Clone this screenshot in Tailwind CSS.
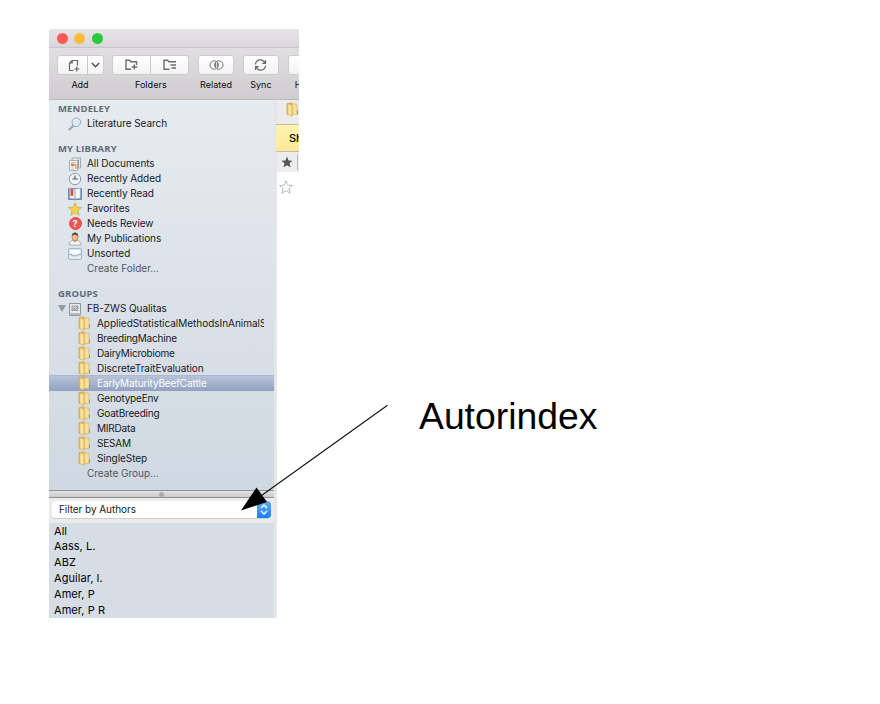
<!DOCTYPE html>
<html lang="en">
<head>
<meta charset="utf-8">
<title>Autorindex</title>
<script src="https://cdn.jsdelivr.net/npm/@tailwindcss/browser@4"></script>
</head>
<body class="relative h-[704px] w-[880px] overflow-hidden bg-white font-['Inter','Liberation_Sans',sans-serif] text-[10px] text-[#17191d]">
<svg class="absolute size-0">
  <defs>
    <linearGradient id="gold" x1="0" x2="1"><stop offset="0" stop-color="#ecc261"/><stop offset=".5" stop-color="#fdebb0"/><stop offset="1" stop-color="#efcd7a"/></linearGradient>
    <symbol id="folder" viewBox="0 0 13 15"><path d="M1 1.8 6 .7l.5 11.500L1 12.500z" fill="#e8bb56" stroke="#cda24a" stroke-width=".6"/><path d="M6 2h5v10.500H6z" fill="#f8df9a" stroke="#d3ab5a" stroke-width=".6"/><path d="M1.300 1.500 6.200 3.200v11L1.300 12.400z" fill="url(#gold)" stroke="#d3a447" stroke-width=".6"/><path d="M11.500 8.600v3.500" stroke="#7f9390" stroke-width=".9"/></symbol>
    <symbol id="star" viewBox="0 0 14 14"><path d="m7 .7 1.800 4.500 4.700.3-3.600 3 1.200 4.700L7 10.700l-4.100 2.500 1.200-4.700-3.600-3 4.700-.3z"/></symbol>
  </defs>
</svg>

<main class="ml-[49px] mt-[29px] flex h-[589px] w-[250px] flex-col overflow-hidden bg-white">
  <header class="h-[71px] shrink-0 overflow-hidden rounded-tl-[3px] border-b border-[#bcb9bc] bg-gradient-to-b from-[#e7e5e7] to-[#d0cdd0]">
    <div class="flex h-[19px] items-center gap-[6.5px] border-b border-[#c8c5c8] bg-gradient-to-b from-[#e6e4e6] to-[#d9d7d9] pl-[7.5px]">
      <i class="size-[11px] rounded-full bg-[#fc5b57]"></i><i class="size-[11px] rounded-full bg-[#fdbb3e]"></i><i class="size-[11px] rounded-full bg-[#2bc840]"></i>
    </div>
    <div class="flex w-[300px] gap-[8.8px] pl-[7.5px] pt-[7px] text-[9px] leading-[12px] text-[#0c0c0c]">
      <div class="w-[47px] shrink-0 text-center">
        <div class="flex h-[20px] rounded-[3px] border border-[#cfcccf] bg-gradient-to-b from-white to-[#f4f3f4]">
          <span class="flex w-[30px] items-center justify-center border-r border-[#cac8ca]"><svg class="ml-1 h-[13px] w-[12px]" viewBox="0 0 12 13" fill="none" stroke="#666" stroke-width="1.2"><path d="M5.500 11.500H1.500V4L4 1.500h5.500v5M4.200 1.500V4H1.500M8.800 7.500v5M6.300 10h5"/></svg></span>
          <span class="flex flex-1 items-center justify-center"><svg class="h-[6px] w-[9px]" viewBox="0 0 9 6" fill="none" stroke="#4b4b4b" stroke-width="1.400"><path d="m.8 1 3.700 3.800L8.200 1"/></svg></span>
        </div>
        <p class="mt-[4px]">Add</p>
      </div>
      <div class="w-[77px] shrink-0 text-center">
        <div class="flex h-[20px] rounded-[3px] border border-[#cfcccf] bg-gradient-to-b from-white to-[#f4f3f4]">
          <span class="flex flex-1 items-center justify-center border-r border-[#cac8ca]"><svg class="h-[12px] w-[13px]" viewBox="0 0 13 12" fill="none" stroke="#6b6b6b" stroke-width="1.400"><path d="M6 10.300H1V1.200h3.500L6 2.800h5.500V6M9.300 5.500v5M6.800 8h5.500"/></svg></span>
          <span class="flex flex-1 items-center justify-center"><svg class="h-[12px] w-[14px]" viewBox="0 0 14 12" fill="none" stroke="#6b6b6b" stroke-width="1.400"><path d="M6.500 10.300H1V1.200h3.500L6 2.800h7M7.500 6h5.500M8.500 9h4.500"/></svg></span>
        </div>
        <p class="mt-[4px] tracking-[.05px]">Folders</p>
      </div>
      <div class="w-[36px] shrink-0 text-center">
        <div class="flex h-[20px] items-center justify-center rounded-[3px] border border-[#cfcccf] bg-gradient-to-b from-white to-[#f4f3f4]"><svg class="h-[10px] w-[15px]" viewBox="0 0 15 10" fill="none" stroke="#747474"><circle cx="5.200" cy="5" r="4.200"/><circle cx="9.800" cy="5" r="4.200"/><path d="M6.600 3v4M8.400 3v4"/></svg></div>
        <p class="mt-[4px] tracking-[.05px]">Related</p>
      </div>
      <div class="w-[36px] shrink-0 text-center">
        <div class="flex h-[20px] items-center justify-center rounded-[3px] border border-[#cfcccf] bg-gradient-to-b from-white to-[#f4f3f4]"><svg class="h-[12px] w-[13px]" viewBox="0 0 13 12" fill="none" stroke="#6b6b6b" stroke-width="1.200"><path d="M1.500 5.500A4.800 4.800 0 0 1 10.800 4M11.500 1v3.300H8.300M11.500 6.500A4.800 4.800 0 0 1 2.200 8M1.500 11V7.700h3.200"/></svg></div>
        <p class="mt-[4px]">Sync</p>
      </div>
      <div class="w-[36px] shrink-0">
        <div class="h-[20px] rounded-[3px] border border-[#cfcccf] bg-gradient-to-b from-white to-[#f4f3f4]"></div>
        <p class="mt-[4px] pl-[7px]">Help</p>
      </div>
    </div>
  </header>

  <div class="flex min-h-0 flex-1">
    <aside class="flex w-[225px] shrink-0 flex-col">
      <nav class="h-[390px] shrink-0 overflow-hidden bg-gradient-to-b from-[#e6ebf0] to-[#d0d8e1] pt-px leading-[15px] tracking-[-.06px]">
        <h2 class="pl-[9px] font-['Open_Sans',sans-serif] text-[9.5px] font-bold tracking-[.15px] text-[#5f6b79]">MENDELEY</h2>
        <ul>
          <li class="flex h-[15px] items-center pl-[19px]"><svg class="mr-[5px] size-[14px]" viewBox="0 0 14 14"><path d="m1.500 12.500 4-4" stroke="#a0a3a7" stroke-width="2.200" stroke-linecap="round"/><circle cx="8.300" cy="5.300" r="4.300" fill="#d9ebf8" stroke="#9ba6b1"/><path d="M5.800 4.800a2.800 2.800 0 0 1 4-2" fill="none" stroke="#fff"/></svg><span>Literature Search</span></li>
        </ul>
        <h2 class="mt-[10px] pl-[9px] font-['Open_Sans',sans-serif] text-[9.5px] font-bold tracking-[.15px] text-[#5f6b79]">MY LIBRARY</h2>
        <ul>
          <li class="flex h-[15px] items-center pl-[19px]"><svg class="mr-[5px] size-[14px]" viewBox="0 0 14 14"><path d="M4 1h8.500v10H4z" fill="#e9ecef" stroke="#929aa1" stroke-width=".8"/><path d="M10.500 2.500v8" stroke="#8698a8"/><path d="M1.500 3.500h8v10h-8z" fill="#fff" stroke="#929aa1" stroke-width=".8"/><path d="M3 5.300h5M3 10h3M3 12h3" stroke="#a3a9ae" stroke-width=".8"/><path d="M3 6.500h3.500v2.500H3z" fill="#dc7f35"/><path d="M7 6.500h1.500V12H7z" fill="#e4a24d"/></svg><span>All Documents</span></li>
          <li class="flex h-[15px] items-center pl-[19px]"><svg class="mr-[5px] size-[14px]" viewBox="0 0 14 14"><circle cx="7" cy="7" r="5.700" fill="#f0f4f7" stroke="#929ba3"/><path d="M7 3.500V7h3M4.300 7H7" stroke="#59636b" fill="none" stroke-width="1.200"/></svg><span>Recently Added</span></li>
          <li class="flex h-[15px] items-center pl-[19px]"><svg class="mr-[5px] size-[14px]" viewBox="0 0 14 14"><path d="M.5 1.500h13v11H8L7 13l-1-.5H.5z" fill="#5f93bf" stroke="#446f94" stroke-width=".6"/><path d="M1.700 1.200 7 2v10l-5.300-.8zM7 2l5.300-.8v10L7 12z" fill="#fafafa" stroke="#9ba5ae" stroke-width=".6"/><path d="M2.600 1.400h2.600v8l-1.300-1-1.300 1z" fill="#e34444"/></svg><span>Recently Read</span></li>
          <li class="flex h-[15px] items-center pl-[19px]"><svg class="mr-[5px] size-[14px]" fill="#f4d64b" stroke="#c3a439" stroke-width=".7"><use href="#star"/></svg><span>Favorites</span></li>
          <li class="flex h-[15px] items-center pl-[19px]"><span class="ml-[.5px] mr-[5.5px] flex size-[13px] items-center justify-center rounded-full border border-[#dc4b49] bg-[#f05752] text-[9px] font-bold text-white">?</span><span>Needs Review</span></li>
          <li class="flex h-[15px] items-center pl-[19px]"><svg class="mr-[5px] size-[14px]" viewBox="0 0 14 14"><path d="M1.200 13c0-3 1.500-4.200 3.800-4.500h4c2.300.3 3.800 1.500 3.800 4.500z" fill="#f9f9f9" stroke="#8c8c8c" stroke-width=".7"/><path d="m5.300 8.500 1.700 2.800 1.700-2.800z" fill="#e0a278"/><ellipse cx="7" cy="5" rx="3" ry="4" fill="#efbc8d" stroke="#9d704c" stroke-width=".6"/><path d="M3.800 4.500C3.300-.7 10.700-.7 10.200 4.500 9.500 2.900 7 2.300 5 2.800z" fill="#5b4336"/></svg><span>My Publications</span></li>
          <li class="flex h-[15px] items-center pl-[19px]"><svg class="mr-[5px] size-[14px]" viewBox="0 0 14 14"><rect x=".6" y="1.600" width="12.800" height="10.800" rx="1.200" fill="#e6f0f8" stroke="#8ba5bc" stroke-width=".8"/><path d="M2.500 3.500h9v3h-9z" fill="#fff"/><path d="M1 7.500h2.800v1.300h6.400V7.500H13" fill="none" stroke="#8ba9c3" stroke-width=".9"/></svg><span>Unsorted</span></li>
          <li class="h-[15px] pl-[38px] tracking-[0px] text-[#50565d]">Create Folder...</li>
        </ul>
        <h2 class="mt-[10px] pl-[9px] font-['Open_Sans',sans-serif] text-[9.5px] font-bold tracking-[.15px] text-[#5f6b79]">GROUPS</h2>
        <ul>
          <li class="flex h-[15px] items-center pl-[9px]"><svg class="mr-[2px] h-[7px] w-[8px]" viewBox="0 0 8 7"><path d="M0 0h8L4 7z" fill="#939ca6"/></svg><svg class="mr-[5px] size-[14px]" viewBox="0 0 14 14"><path d="M1.500 1.500h11v10.500h-11z" fill="#e6e7e8" stroke="#929699"/><path d="M4 4h6v4.500H4z" fill="#c8ccd0" stroke="#92979b" stroke-width=".8"/><path d="m4 8.500 2-2 1.500 1L10 5M1 13.300h12" stroke="#878c90" fill="none"/></svg><span>FB-ZWS Qualitas</span></li>
          <li class="flex h-[15px] items-center pl-[29px]"><svg class="mr-[6px] h-[15px] w-[13px] shrink-0"><use href="#folder"/></svg><span class="w-[166.5px] overflow-hidden whitespace-nowrap tracking-[-.03px]">AppliedStatisticalMethodsInAnimalSc</span></li>
          <li class="flex h-[15px] items-center pl-[29px]"><svg class="mr-[6px] h-[15px] w-[13px]"><use href="#folder"/></svg><span class="tracking-[-.2px]">BreedingMachine</span></li>
          <li class="flex h-[15px] items-center pl-[29px]"><svg class="mr-[6px] h-[15px] w-[13px]"><use href="#folder"/></svg><span class="tracking-[-.2px]">DairyMicrobiome</span></li>
          <li class="flex h-[15px] items-center pl-[29px]"><svg class="mr-[6px] h-[15px] w-[13px]"><use href="#folder"/></svg><span>DiscreteTraitEvaluation</span></li>
          <li class="flex h-[15px] items-center bg-gradient-to-b from-[#b7c3d9] to-[#91a1c0] pl-[29px] text-white shadow-[0_-1px_0_#adb9ca]"><svg class="mr-[6px] h-[15px] w-[13px]"><use href="#folder"/></svg><span class="tracking-[-.12px]">EarlyMaturityBeefCattle</span></li>
          <li class="flex h-[15px] items-center pl-[29px]"><svg class="mr-[6px] h-[15px] w-[13px]"><use href="#folder"/></svg><span class="tracking-[-.2px]">GenotypeEnv</span></li>
          <li class="flex h-[15px] items-center pl-[29px]"><svg class="mr-[6px] h-[15px] w-[13px]"><use href="#folder"/></svg><span class="tracking-[-.2px]">GoatBreeding</span></li>
          <li class="flex h-[15px] items-center pl-[29px]"><svg class="mr-[6px] h-[15px] w-[13px]"><use href="#folder"/></svg><span class="tracking-[-.2px]">MIRData</span></li>
          <li class="flex h-[15px] items-center pl-[29px]"><svg class="mr-[6px] h-[15px] w-[13px]"><use href="#folder"/></svg><span class="tracking-[-.2px]">SESAM</span></li>
          <li class="flex h-[15px] items-center pl-[29px]"><svg class="mr-[6px] h-[15px] w-[13px]"><use href="#folder"/></svg><span>SingleStep</span></li>
          <li class="h-[15px] pl-[38px] tracking-[-.03px] text-[#50565d]">Create Group...</li>
        </ul>
      </nav>
      <div class="flex h-[8px] shrink-0 items-center justify-center border-y border-[#929292] bg-gradient-to-b from-[#e3e3e3] to-[#cbcbcb]"><i class="size-[5px] rounded-full bg-[#aaa]"></i></div>
      <div class="h-[25px] shrink-0 bg-[#ebebeb] pl-[3px] pr-[3px] pt-[3px]">
        <div class="flex h-[17px] items-center justify-between overflow-hidden rounded-[3px] bg-white pl-[7px] shadow-[0_1px_0_#cfcfcf]">
          <span class="tracking-[-.06px]">Filter by Authors</span>
          <span class="flex h-full w-[14px] items-center justify-center rounded-r-[3px] bg-gradient-to-b from-[#62adf9] to-[#167dfa]"><svg class="h-[11px] w-[8px]" viewBox="0 0 8 11" fill="none" stroke="#fff" stroke-width="1.300"><path d="m1 4 3-3 3 3M1 7l3 3 3-3"/></svg></span>
        </div>
      </div>
      <ul class="flex-1 bg-[#d6dde5] pl-[5px] pt-[.6px] text-[11px] leading-[15.8px] tracking-[.06px] text-[#000]">
        <li>All</li><li>Aass, L.</li><li>ABZ</li><li>Aguilar, I.</li><li>Amer, P</li><li>Amer, P R</li>
      </ul>
    </aside>
    <div class="w-[3px] shrink-0 bg-[#e6e6e6]"></div>
    <section class="min-w-0 flex-1">
      <div class="h-[24px] overflow-hidden bg-[#ececec] pl-[9px] pt-[2px]"><div class="flex w-[40px]"><svg class="h-[15px] w-[13px]"><use href="#folder"/></svg></div></div>
      <div class="relative -ml-px flex h-[28px] items-center overflow-hidden whitespace-nowrap border-y border-[#c2bda4] bg-gradient-to-b from-[#fff2b0] to-[#fde99a] pl-[13px] text-[11px] font-medium text-black">Show</div>
      <div class="flex h-[20px] items-center bg-[#ededed] pl-[4px]"><svg class="size-[12px]" viewBox="0 0 14 14" fill="#555"><use href="#star" width="14" height="14"/></svg><i class="ml-[4px] h-[15px] w-px bg-[#bbb]"></i></div>
      <div class="pl-[2px] pt-[8px]"><svg class="size-[14px]" fill="#fff" stroke="#aaa" stroke-width=".8"><use href="#star"/></svg></div>
    </section>
  </div>
</main>

<svg class="absolute left-0 top-0 h-[704px] w-[880px]" viewBox="0 0 880 704"><path d="M387.500 405.300 258 498" stroke="#111" stroke-width="1.100"/><path d="m241 510.500 15.500-23 10.500 14.500z"/></svg>
<p class="absolute left-[419px] top-[393.500px] whitespace-nowrap font-['Liberation_Sans',sans-serif] text-[37.300px] leading-[44px] text-black">Autorindex</p>
</body>
</html>
